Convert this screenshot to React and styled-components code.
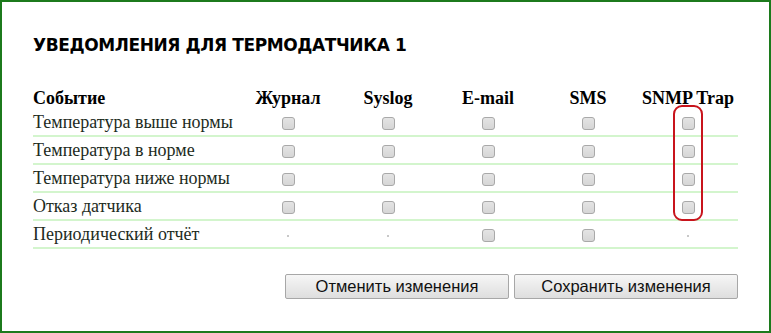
import React from "react";
import styled, { createGlobalStyle } from "styled-components";

const GlobalStyle = createGlobalStyle`
  html, body {
    margin: 0;
    padding: 0;
    background: #fff;
  }
`;

const Frame = styled.div`
  box-sizing: border-box;
  width: 771px;
  height: 333px;
  border: 2px solid #1c7a1c;
  padding: 33px 0 0 31px;
`;

const Title = styled.h2`
  margin: 0;
  font-family: "DejaVu Sans", Verdana, sans-serif;
  font-size: 17px;
  letter-spacing: -0.4px;
  font-weight: bold;
  line-height: 20px;
  color: #000;
`;

const TableWrap = styled.div`
  position: relative;
  width: 705px;
  margin-top: 32px;
`;

const Table = styled.table`
  width: 705px;
  border-collapse: collapse;
  table-layout: fixed;
  font-family: "Liberation Serif", "Times New Roman", serif;
  font-size: 18px;
  color: #000;
`;

const Th = styled.th`
  width: ${({ $w }) => $w}px;
  padding: 0;
  height: 22px;
  line-height: 20px;
  vertical-align: middle;
  text-align: ${({ $left }) => ($left ? "left" : "center")};
  font-weight: bold;
  white-space: nowrap;
`;

const Row = styled.tr`
  border-bottom: 2px solid #d3f5cd;
`;

const Td = styled.td`
  padding: 0;
  height: 26px;
  line-height: 20px;
  vertical-align: middle;
  white-space: nowrap;
  text-align: ${({ $left }) => ($left ? "left" : "center")};
  color: ${({ $left }) => ($left ? "#1d2b1d" : "inherit")};
`;

const Box = styled.span`
  display: inline-block;
  box-sizing: border-box;
  width: 13px;
  height: 13px;
  border: 1px solid #a9a9a9;
  border-radius: 3px;
  background: linear-gradient(#e4e4e4, #d6d6d6);
  vertical-align: middle;
`;

const Dot = styled.span`
  display: inline-block;
  width: 2px;
  height: 2px;
  background: #c8c8c8;
  vertical-align: middle;
`;

const Highlight = styled.div`
  position: absolute;
  left: 640px;
  top: 18px;
  width: 30px;
  height: 116px;
  box-sizing: border-box;
  border: 2px solid #c8141c;
  border-radius: 9px;
  pointer-events: none;
`;

const Actions = styled.div`
  display: flex;
  justify-content: flex-end;
  gap: 5px;
  width: 705px;
  margin-top: 25px;
`;

const Button = styled.button`
  width: 224px;
  height: 25px;
  padding: 0;
  border: 1px solid #a7a7a7;
  border-radius: 2px;
  background: linear-gradient(#f6f6f6, #dedede);
  font-family: "Liberation Sans", Arial, sans-serif;
  font-size: 16.5px;
  color: #111;
`;

const columns = ["Журнал", "Syslog", "E-mail", "SMS", "SNMP Trap"];

const events = [
  { name: "Температура выше нормы", on: [1, 1, 1, 1, 1] },
  { name: "Температура в норме", on: [1, 1, 1, 1, 1] },
  { name: "Температура ниже нормы", on: [1, 1, 1, 1, 1] },
  { name: "Отказ датчика", on: [1, 1, 1, 1, 1] },
  { name: "Периодический отчёт", on: [0, 0, 1, 1, 0] },
];

export default function App() {
  return (
    <>
      <GlobalStyle />
      <Frame>
        <Title>УВЕДОМЛЕНИЯ ДЛЯ ТЕРМОДАТЧИКА 1</Title>
        <TableWrap>
          <Table>
            <thead>
              <tr>
                <Th $left $w={205}>Событие</Th>
                {columns.map((c) => (
                  <Th key={c} $w={100}>{c}</Th>
                ))}
              </tr>
            </thead>
            <tbody>
              {events.map((ev) => (
                <Row key={ev.name}>
                  <Td $left>{ev.name}</Td>
                  {ev.on.map((v, i) => (
                    <Td key={i}>{v ? <Box /> : <Dot />}</Td>
                  ))}
                </Row>
              ))}
            </tbody>
          </Table>
          <Highlight />
        </TableWrap>
        <Actions>
          <Button>Отменить изменения</Button>
          <Button>Сохранить изменения</Button>
        </Actions>
      </Frame>
    </>
  );
}
